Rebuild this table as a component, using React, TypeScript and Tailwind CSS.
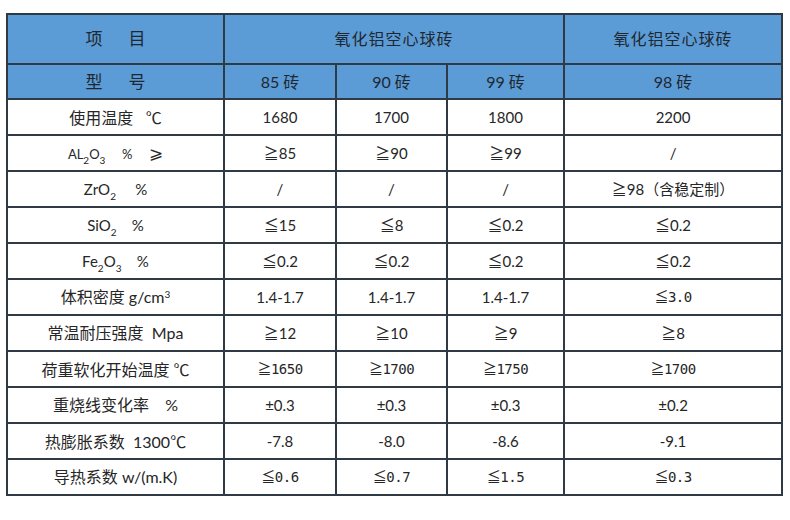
import React from "react";

type Cell = { v: React.ReactNode; mono?: boolean };

const c = (v: React.ReactNode, mono = false): Cell => ({ v, mono });

const Sub = ({ children }: { children: React.ReactNode }) => (
  <sub className="text-[10px] align-[-2px]">{children}</sub>
);

// CJK glyphs (℃, ≦, ≧) taken from the CJK font so they look full-width
const Cj = ({ children }: { children: React.ReactNode }) => (
  <span className="font-['Noto_Sans_CJK_SC',sans-serif]">{children}</span>
);

const deg = <Cj>℃</Cj>;

const rows: { label: React.ReactNode; cells: Cell[] }[] = [
  { label: <>使用温度&nbsp;&nbsp;&nbsp;{deg}</>, cells: [c("1680"), c("1700"), c("1800"), c("2200")] },
  {
    label: (
      <span className="text-[13px]">
        AL<Sub>2</Sub>O<Sub>3</Sub>&nbsp;&nbsp;&nbsp;&nbsp;&nbsp;%&nbsp;&nbsp;&nbsp;&nbsp;&nbsp;
        <span className="text-[17px]">⩾</span>
      </span>
    ),
    cells: [c("≧85"), c("≧90"), c("≧99"), c("/")],
  },
  {
    label: <span className="text-[15px]">ZrO<Sub>2</Sub>&nbsp;&nbsp;&nbsp;&nbsp;&nbsp;%</span>,
    cells: [c("/"), c("/"), c("/"), c(<>≧98（含稳定制）</>)],
  },
  {
    label: <span className="text-[15px]">SiO<Sub>2</Sub>&nbsp;&nbsp;&nbsp;&nbsp;%</span>,
    cells: [c("≦15"), c("≦8"), c("≦0.2"), c("≦0.2")],
  },
  {
    label: <span className="text-[15px]">Fe<Sub>2</Sub>O<Sub>3</Sub>&nbsp;&nbsp;&nbsp;&nbsp;%</span>,
    cells: [c("≦0.2"), c("≦0.2"), c("≦0.2"), c("≦0.2")],
  },
  {
    label: <>体积密度 g/cm<sup className="text-[10px]">3</sup></>,
    cells: [c("1.4-1.7"), c("1.4-1.7"), c("1.4-1.7"), c(<><Cj>≦</Cj>3.0</>, true)],
  },
  { label: <>常温耐压强度&nbsp;&nbsp;Mpa</>, cells: [c("≧12"), c("≧10"), c("≧9"), c("≧8")] },
  {
    label: <>荷重软化开始温度&nbsp;{deg}</>,
    cells: [
      c(<><Cj>≧</Cj>1650</>, true),
      c(<><Cj>≧</Cj>1700</>, true),
      c(<><Cj>≧</Cj>1750</>, true),
      c(<><Cj>≧</Cj>1700</>, true),
    ],
  },
  { label: <>重烧线变化率&nbsp;&nbsp;&nbsp;&nbsp;%</>, cells: [c("±0.3"), c("±0.3"), c("±0.3"), c("±0.2")] },
  { label: <>热膨胀系数&nbsp;&nbsp;1300{deg}</>, cells: [c("-7.8"), c("-8.0"), c("-8.6"), c("-9.1")] },
  {
    label: <>导热系数 w/(m.K)</>,
    cells: [
      c(<><Cj>≦</Cj>0.6</>, true),
      c(<><Cj>≦</Cj>0.7</>, true),
      c(<><Cj>≦</Cj>1.5</>, true),
      c(<><Cj>≦</Cj>0.3</>, true),
    ],
  },
];

const bd = "border-2 border-[#2f3a44]";

export default function App() {
  return (
    <div
      className="w-[790px] h-[520px] bg-white pl-[6px] pt-[13px] text-[#262626] text-[15px]"
      style={{ fontFamily: 'Lato, "Noto Sans CJK SC", sans-serif' }}
    >
      <table className="border-collapse table-fixed w-[775px] text-center">
        <colgroup>
          <col className="w-[217px]" />
          <col className="w-[112px]" />
          <col className="w-[111px]" />
          <col className="w-[117px]" />
          <col className="w-[218px]" />
        </colgroup>
        <thead className="bg-[#5b9bd6] text-[16px] text-[#1f2830]">
          <tr className="h-[50px]">
            <th className={`${bd} font-normal text-[17px]`}>项&nbsp;&nbsp;&nbsp;&nbsp;&nbsp;&nbsp;目</th>
            <th colSpan={3} className={`${bd} font-normal tracking-[1px]`}>氧化铝空心球砖</th>
            <th className={`${bd} font-normal tracking-[1px]`}>氧化铝空心球砖</th>
          </tr>
          <tr className="h-[35px]">
            <th className={`${bd} font-normal text-[17px]`}>型&nbsp;&nbsp;&nbsp;&nbsp;&nbsp;&nbsp;号</th>
            <th className={`${bd} font-normal`}>85 砖</th>
            <th className={`${bd} font-normal`}>90 砖</th>
            <th className={`${bd} font-normal`}>99 砖</th>
            <th className={`${bd} font-normal`}>98 砖</th>
          </tr>
        </thead>
        <tbody>
          {rows.map((r, i) => (
            <tr key={i} className="h-[36px]">
              <td className={`${bd} text-[16px]`}>{r.label}</td>
              {r.cells.map((cell, j) => (
                <td
                  key={j}
                  className={`${bd} ${cell.mono ? "font-['DejaVu_Sans_Mono','Noto_Sans_CJK_SC',monospace] text-[14px] tracking-[-0.5px]" : ""}`}
                >
                  {cell.v}
                </td>
              ))}
            </tr>
          ))}
        </tbody>
      </table>
    </div>
  );
}
